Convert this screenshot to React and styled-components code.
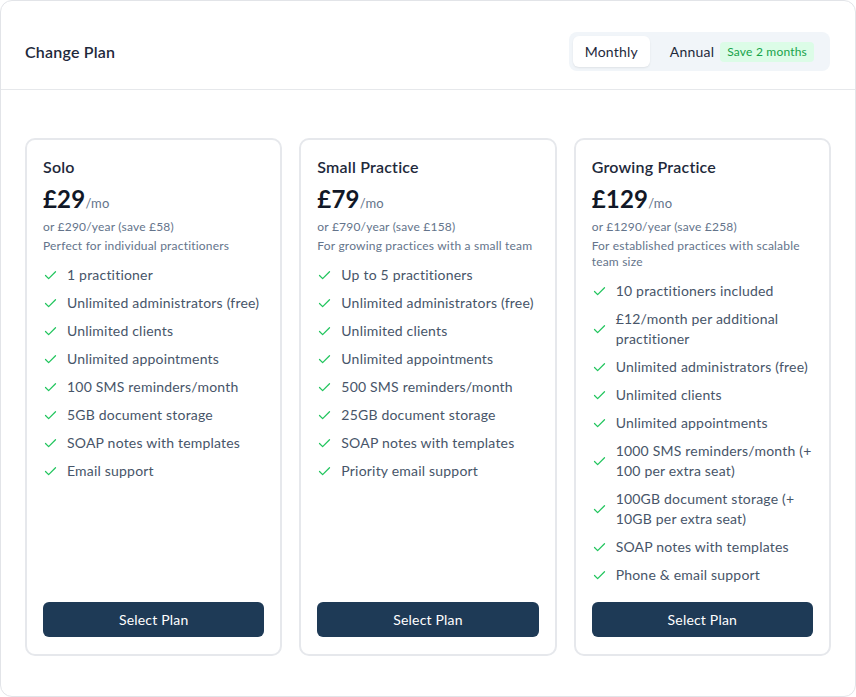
import React from "react";
import styled, { createGlobalStyle } from "styled-components";
import { Check } from "lucide-react";

const Global = createGlobalStyle`
  * { box-sizing: border-box; }
  html, body { margin: 0; padding: 0; background: #fff; }
  body { font-family: Lato, "Noto Sans", sans-serif; color: #1e293b; letter-spacing: 0.2px; }
`;

const Shell = styled.div`
  width: 856px;
  height: 697px;
  border: 1px solid #e2e4e8;
  border-radius: 12px;
  background: #fff;
  display: flex;
  flex-direction: column;
  overflow: hidden;
`;

const Header = styled.div`
  height: 89px;
  flex: none;
  display: flex;
  align-items: center;
  justify-content: space-between;
  padding: 13px 25px 0 24px;
  border-bottom: 1px solid #e6e8eb;
`;

const Title = styled.h2`
  margin: 0;
  font-size: 16px;
  font-weight: 600;
  color: #1e293b;
`;

const Toggle = styled.div`
  display: flex;
  align-items: center;
  gap: 4px;
  padding: 4px;
  background: #f1f5f9;
  border-radius: 8px;
  height: 39px;
`;

const ToggleBtn = styled.button`
  border: none;
  font-family: inherit;
  letter-spacing: inherit;
  font-size: 14px;
  color: #1e293b;
  height: 31px;
  padding: 0 12px;
  border-radius: 6px;
  display: flex;
  align-items: center;
  gap: 6px;
  white-space: nowrap;
  background: ${(p) => (p.$active ? "#fff" : "transparent")};
  box-shadow: ${(p) => (p.$active ? "0 1px 2px rgba(0,0,0,0.08)" : "none")};
  margin-left: ${(p) => (p.$active ? "0" : "4px")};
`;

const Badge = styled.span`
  background: #dcfce7;
  color: #16a34a;
  font-size: 12px;
  line-height: 16px;
  padding: 2px 7px;
  border-radius: 4px;
  white-space: nowrap;
`;

const Body = styled.div`
  flex: 1;
  padding: 48px 24px 40px;
  display: grid;
  grid-template-columns: repeat(3, 1fr);
  gap: 17px;
`;

const Card = styled.div`
  border: 2px solid #e6e8ec;
  border-radius: 10px;
  padding: 16px 16px 17px;
  display: flex;
  flex-direction: column;
`;

const PlanName = styled.h3`
  margin: 0;
  font-size: 16px;
  font-weight: 600;
  line-height: 22px;
  color: #1e293b;
`;

const PriceRow = styled.div`
  margin-top: 6px;
  display: flex;
  align-items: baseline;
  line-height: 30px;
`;

const Price = styled.span`
  font-size: 24px;
  font-weight: 700;
  color: #111827;
`;

const Per = styled.span`
  font-size: 13px;
  color: #64748b;
`;

const Small = styled.p`
  margin: 0;
  font-size: 12px;
  line-height: 16px;
  color: #64748b;
  margin-top: ${(p) => p.$mt || 0}px;
`;

const Features = styled.ul`
  list-style: none;
  margin: 11px 0 0;
  padding: 0;
  display: flex;
  flex-direction: column;
  gap: 8px;
`;

const Feature = styled.li`
  display: flex;
  align-items: center;
  gap: 9px;
  font-size: 14px;
  line-height: 20px;
  color: #475569;
  svg { flex: none; color: #22c55e; }
`;

const SelectBtn = styled.button`
  margin-top: auto;
  height: 35px;
  width: 100%;
  border: none;
  border-radius: 6px;
  background: #1e3a56;
  color: #fff;
  font-family: inherit;
  letter-spacing: inherit;
  font-size: 14px;
  cursor: pointer;
`;

const Spacer = styled.div`
  flex: 1;
  min-height: 17px;
`;

const plans = [
  {
    name: "Solo",
    price: "£29",
    year: "or £290/year (save £58)",
    desc: "Perfect for individual practitioners",
    features: [
      "1 practitioner",
      "Unlimited administrators (free)",
      "Unlimited clients",
      "Unlimited appointments",
      "100 SMS reminders/month",
      "5GB document storage",
      "SOAP notes with templates",
      "Email support",
    ],
  },
  {
    name: "Small Practice",
    price: "£79",
    year: "or £790/year (save £158)",
    desc: "For growing practices with a small team",
    features: [
      "Up to 5 practitioners",
      "Unlimited administrators (free)",
      "Unlimited clients",
      "Unlimited appointments",
      "500 SMS reminders/month",
      "25GB document storage",
      "SOAP notes with templates",
      "Priority email support",
    ],
  },
  {
    name: "Growing Practice",
    price: "£129",
    year: "or £1290/year (save £258)",
    desc: "For established practices with scalable team size",
    features: [
      "10 practitioners included",
      "£12/month per additional practitioner",
      "Unlimited administrators (free)",
      "Unlimited clients",
      "Unlimited appointments",
      "1000 SMS reminders/month (+ 100 per extra seat)",
      "100GB document storage (+ 10GB per extra seat)",
      "SOAP notes with templates",
      "Phone & email support",
    ],
  },
];

export default function App() {
  return (
    <>
      <Global />
      <Shell>
        <Header>
          <Title>Change Plan</Title>
          <Toggle>
            <ToggleBtn $active>Monthly</ToggleBtn>
            <ToggleBtn>
              Annual <Badge>Save 2 months</Badge>
            </ToggleBtn>
          </Toggle>
        </Header>
        <Body>
          {plans.map((p) => (
            <Card key={p.name}>
              <PlanName>{p.name}</PlanName>
              <PriceRow>
                <Price>{p.price}</Price>
                <Per>/mo</Per>
              </PriceRow>
              <Small $mt={1}>{p.year}</Small>
              <Small $mt={3}>{p.desc}</Small>
              <Features>
                {p.features.map((f) => (
                  <Feature key={f}>
                    <Check size={15} strokeWidth={2} />
                    <span>{f}</span>
                  </Feature>
                ))}
              </Features>
              <Spacer />
              <SelectBtn>Select Plan</SelectBtn>
            </Card>
          ))}
        </Body>
      </Shell>
    </>
  );
}
